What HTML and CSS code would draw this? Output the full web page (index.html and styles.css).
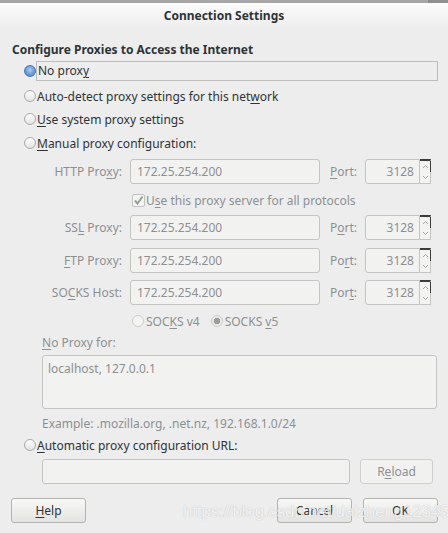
FILE: index.html
```html
<!DOCTYPE html>
<html lang="en">
<head>
    <meta charset="UTF-8">
    <title>Connection Settings</title>
    <link rel="stylesheet" href="styles.css">
</head>
<body>
    <div class="parent-bar"><span></span></div>
    <div class="titlebar">Connection Settings</div>

    <div class="dialog">
        <h1>Configure Proxies to Access the Internet</h1>

        <div class="option focused"><span class="radio on"></span><span class="focus-box">No prox<u>y</u></span></div>
        <div class="option first-gap"><span class="radio"></span><span>Auto-detect proxy settings for this net<u>w</u>ork</span></div>
        <div class="option tight"><span class="radio"></span><span><u>U</u>se system proxy settings</span></div>
        <div class="option"><span class="radio"></span><span><u>M</u>anual proxy configuration:</span></div>

        <div class="proxies">
            <div class="proxy-row">
                <span class="row-label">HTTP Pro<u>x</u>y:</span>
                <span class="field">172.25.254.200</span>
                <span class="port-label"><u>P</u>ort:</span>
                <span class="spin">
                    <span class="spin-value">3128</span>
                    <span class="spin-btns">
                        <span class="up"><svg width="7" height="5" viewBox="0 0 7 5"><path d="M1 4L3.5 1.5L6 4" fill="none" stroke="#a2a4a3" stroke-width="1"/></svg></span>
                        <span class="down"><svg width="7" height="5" viewBox="0 0 7 5"><path d="M1 1L3.5 3.5L6 1" fill="none" stroke="#a2a4a3" stroke-width="1"/></svg></span>
                    </span>
                </span>
            </div>
            <div class="share-row"><span class="check"><svg width="11" height="11" viewBox="0 0 11 11"><path d="M2 5.5L4.5 8.5L9.5 1.5" fill="none" stroke="#8ea68e" stroke-width="2"/></svg></span><span>U<u>s</u>e this proxy server for all protocols</span></div>
            <div class="proxy-row ssl">
                <span class="row-label">SS<u>L</u> Proxy:</span>
                <span class="field">172.25.254.200</span>
                <span class="port-label">P<u>o</u>rt:</span>
                <span class="spin">
                    <span class="spin-value">3128</span>
                    <span class="spin-btns">
                        <span class="up"><svg width="7" height="5" viewBox="0 0 7 5"><path d="M1 4L3.5 1.5L6 4" fill="none" stroke="#a2a4a3" stroke-width="1"/></svg></span>
                        <span class="down"><svg width="7" height="5" viewBox="0 0 7 5"><path d="M1 1L3.5 3.5L6 1" fill="none" stroke="#a2a4a3" stroke-width="1"/></svg></span>
                    </span>
                </span>
            </div>
            <div class="proxy-row">
                <span class="row-label"><u>F</u>TP Proxy:</span>
                <span class="field">172.25.254.200</span>
                <span class="port-label">Po<u>r</u>t:</span>
                <span class="spin">
                    <span class="spin-value">3128</span>
                    <span class="spin-btns">
                        <span class="up"><svg width="7" height="5" viewBox="0 0 7 5"><path d="M1 4L3.5 1.5L6 4" fill="none" stroke="#a2a4a3" stroke-width="1"/></svg></span>
                        <span class="down"><svg width="7" height="5" viewBox="0 0 7 5"><path d="M1 1L3.5 3.5L6 1" fill="none" stroke="#a2a4a3" stroke-width="1"/></svg></span>
                    </span>
                </span>
            </div>
            <div class="proxy-row socks">
                <span class="row-label">SO<u>C</u>KS Host:</span>
                <span class="field">172.25.254.200</span>
                <span class="port-label">Por<u>t</u>:</span>
                <span class="spin">
                    <span class="spin-value">3128</span>
                    <span class="spin-btns">
                        <span class="up"><svg width="7" height="5" viewBox="0 0 7 5"><path d="M1 4L3.5 1.5L6 4" fill="none" stroke="#a2a4a3" stroke-width="1"/></svg></span>
                        <span class="down"><svg width="7" height="5" viewBox="0 0 7 5"><path d="M1 1L3.5 3.5L6 1" fill="none" stroke="#a2a4a3" stroke-width="1"/></svg></span>
                    </span>
                </span>
            </div>
            <div class="socks-row">
                <span class="radio dim"></span><span>SOC<u>K</u>S v4</span>
                <span class="radio dim on-dim"></span><span>SOCKS <u>v</u>5</span>
            </div>
        </div>

        <div class="no-proxy">
            <div class="sub-label"><u>N</u>o Proxy for:</div>
            <div class="textarea">localhost, 127.0.0.1</div>
            <div class="sub-label example">Example: .mozilla.org, .net.nz, 192.168.1.0/24</div>
        </div>

        <div class="option auto-url"><span class="radio"></span><span><u>A</u>utomatic proxy configuration URL:</span></div>
        <div class="url-row">
            <span class="field url"></span>
            <span class="btn dim-btn">R<u>e</u>load</span>
        </div>

        <div class="buttons">
            <span class="btn help"><u>H</u>elp</span>
            <span class="spacer"></span>
            <span class="btn">Cancel</span>
            <span class="btn">OK</span>
        </div>
    </div>

    <div class="watermark">https://blog.csdn.net/daizheng12345</div>
</body>
</html>
```

FILE: styles.css
```css
body {
    margin: 0;
    width: 448px;
    height: 533px;
    overflow: hidden;
    background: #ededed;
    font-family: "Noto Sans", "Open Sans", sans-serif;
    font-size: 12px;
    color: #2e3436;
    position: relative;
}
.parent-bar {
    height: 3px;
    background: #a7a7a7;
    display: flex;
    justify-content: flex-end;
}
.parent-bar span {
    width: 20px;
    background: #8f8f8f;
}
.titlebar {
    height: 27px;
    background: linear-gradient(#fcfcfc, #ececec);
    text-align: center;
    font-weight: bold;
    font-size: 12px;
    line-height: 26px;
    color: #2e3436;
}
.dialog {
    padding: 11px 10px 0 12px;
    display: flex;
    flex-direction: column;
}
h1 {
    font-size: 12px;
    font-weight: bold;
    margin: 0;
    height: 18px;
    line-height: 18px;
}
.option {
    display: flex;
    align-items: center;
    height: 20px;
    margin-top: 4px;
    padding-left: 12px;
}
.option.focused {
    margin-top: 2px;
}
.option.first-gap {
    margin-top: 5px;
}
.option.tight {
    margin-top: 3px;
}
.focus-box {
    flex: 1;
    height: 18px;
    line-height: 18px;
    border: 1px solid #bdbdbb;
    padding-left: 1px;
    margin-left: -1px;
}
u {
    text-decoration: underline;
    text-underline-offset: 2px;
}
.radio {
    width: 12px;
    height: 12px;
    border-radius: 50%;
    border: 1px solid #a8aaa7;
    background: linear-gradient(#fdfdfd, #e4e4e2);
    margin-right: 1px;
    flex: none;
    box-sizing: border-box;
}
.radio.on {
    border-color: #4a79ba;
    background: radial-gradient(circle at 50% 40%, #b4cff2 0, #6b9be0 55%, #4a79ba 100%);
}
.proxies {
    color: #8d9091;
}
.proxy-row {
    display: flex;
    align-items: center;
    height: 25px;
    margin-top: 8px;
}
.proxy-row:first-child {
    margin-top: 6px;
}
.proxy-row.ssl {
    margin-top: 5px;
}
.proxy-row.socks {
    margin-top: 7px;
}
.row-label {
    width: 110px;
    text-align: right;
    margin-right: 8px;
}
.field {
    width: 190px;
    height: 25px;
    box-sizing: border-box;
    border: 1px solid #c4c5c2;
    border-radius: 3px;
    background: #f2f2f1;
    line-height: 23px;
    padding-left: 6px;
}
.port-label {
    width: 35px;
    margin-left: 10px;
}
.spin {
    display: flex;
    height: 25px;
}
.spin-value {
    width: 55px;
    box-sizing: border-box;
    border: 1px solid #c4c5c2;
    border-radius: 3px 0 0 3px;
    background: #f2f2f1;
    text-align: right;
    padding-right: 5px;
    line-height: 23px;
}
.spin-btns {
    width: 11px;
    box-sizing: border-box;
    border: 1px solid #c4c5c2;
    border-left: none;
    border-top: 2px solid #3b3b3b;
    display: flex;
    flex-direction: column;
    background: #f3f3f2;
}
.spin-btns span {
    flex: 1;
    display: flex;
    align-items: center;
    justify-content: center;
}
.spin-btns .up {
    border-right: 1px solid #3b3b3b;
    margin-right: -1px;
}
.share-row {
    height: 20px;
    display: flex;
    align-items: center;
    padding-left: 120px;
    margin-top: 6px;
}
.check {
    width: 11px;
    height: 11px;
    border: 1px solid #c2c3c0;
    border-radius: 2px;
    background: #f4f4f3;
    margin-right: 1px;
    display: flex;
}
.socks-row {
    height: 20px;
    display: flex;
    align-items: center;
    padding-left: 120px;
    margin-top: 6px;
}
.radio.dim {
    border-color: #cdcecb;
    background: #f4f4f3;
    margin-right: 2px;
}
.radio.dim.on-dim {
    margin-left: 11px;
    background: radial-gradient(circle, #9c9e9b 0 3px, #e9e9e8 3.5px);
}
.no-proxy {
    padding-left: 30px;
    color: #8d9091;
}
.sub-label {
    height: 16px;
    line-height: 16px;
    margin-top: 4px;
}
.textarea {
    margin-top: 4px;
    height: 54px;
    box-sizing: border-box;
    border: 1px solid #c4c5c2;
    border-radius: 3px;
    background: #f2f2f1;
    padding: 4px 5px;
    margin-right: 1px;
}
.example {
    margin-top: 7px;
}
.option.auto-url {
    margin-top: 3px;
}
.url-row {
    display: flex;
    padding-left: 30px;
    margin-top: 4px;
    height: 25px;
}
.field.url {
    width: 308px;
}
.btn {
    box-sizing: border-box;
    width: 75px;
    height: 25px;
    border: 1px solid #b3b4b1;
    border-radius: 3px;
    background: linear-gradient(#f8f8f7, #e3e3e1);
    text-align: center;
    line-height: 23px;
    color: #2e3436;
}
.dim-btn {
    margin-left: 10px;
    width: 73px;
    color: #8d9091;
    background: #f1f1f0;
    border-color: #cfd0cd;
}
.buttons {
    display: flex;
    gap: 11px;
    margin-top: 14px;
    margin-left: -1px;
}
.spacer {
    flex: 1;
}
.watermark {
    position: absolute;
    left: 183px;
    top: 502px;
    font-family: "Liberation Sans", Arial, sans-serif;
    font-size: 17px;
    color: rgba(255, 255, 255, 0.8);
    text-shadow: 0 0 1px rgba(110, 110, 110, 0.45);
    letter-spacing: -0.2px;
}
```
